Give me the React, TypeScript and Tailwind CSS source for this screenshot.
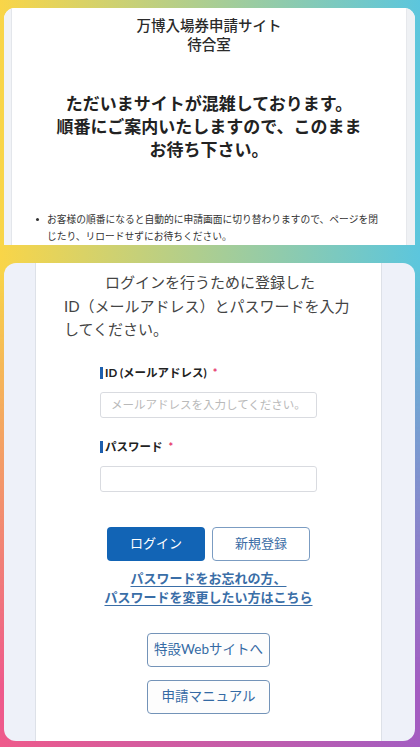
import React from 'react'

function FieldLabel({ text }: { text: string }) {
  return (
    <div className="flex items-center h-[16px]">
      <span className="w-[3px] h-[12px] bg-[#1d5fae]" />
      <span className="ml-[2px] text-[11.5px] font-bold text-[#222]">{text}</span>
      <span className="ml-[6px] text-[11px] font-bold text-[#e6336a] leading-none">*</span>
    </div>
  )
}

function OutlineButton({ label }: { label: string }) {
  return (
    <button className="w-[123px] h-[34px] rounded-[4px] border border-[#7393b8] bg-[#fdfdfd] text-[13.5px] text-[#346aa4]">
      {label}
    </button>
  )
}

export default function App() {
  return (
    <div className="relative w-[420px] h-[747px] overflow-hidden bg-[linear-gradient(to_right,#f9d548,#5cc6dd)] pl-1 pr-[5px] pt-2 pb-[6px] font-['Lato','Noto_Sans_CJK_JP',sans-serif]">
      {/* lower half of the gradient, fades in toward the bottom */}
      <div className="absolute inset-0 bg-[linear-gradient(to_right,#ee5a8b,#a35dc1)] [mask-image:linear-gradient(to_bottom,transparent_36%,black_92%)]" />

      {/* waiting room card (cut off) */}
      <div className="relative flex h-[237px] rounded-t-[11px] overflow-hidden bg-white">
        <div className="w-[8px] bg-[#f1f3f7] border-r border-[#e3e6eb]" />
        <div className="flex-1 bg-white pt-2">
          <div className="text-center text-[14.5px] font-medium leading-[19px] text-[#2b2b2b]">
            万博入場券申請サイト
            <br />
            待合室
          </div>
          <div className="mt-[38px] text-center text-[17px] font-bold leading-[23px] text-[#222]">
            ただいまサイトが混雑しております。
            <br />
            順番にご案内いたしますので、このまま
            <br />
            お待ち下さい。
          </div>
          <div className="mt-[50px] flex pl-[24px] text-[9.75px] leading-[17px] text-[#333]">
            <div className="w-[11px] pt-[7px]">
              <div className="w-[3px] h-[3px] rounded-full bg-[#333]" />
            </div>
            <div>
              お客様の順番になると自動的に申請画面に切り替わりますので、ページを閉
              <br />
              じたり、リロードせずにお待ちください。
            </div>
          </div>
        </div>
        <div className="w-[9px] bg-[#eff1f4] border-l border-[#e6e8ec]" />
      </div>

      <div className="h-[18px]" />

      {/* login card */}
      <div className="relative flex h-[478px] rounded-[12px] overflow-hidden">
        <div className="w-[32px] bg-[#eef1f9] border-r border-[#dde1e8]" />
        <div className="w-[345px] bg-white pt-2">
          <p className="pl-[28px] pr-[20px] indent-[41px] text-[15px] leading-[23.5px] text-[#444]">
            ログインを行うために登録した
            <br />
            ID（メールアドレス）とパスワードを入力
            <br />
            してください。
          </p>

          <div className="mx-auto mt-[23px] w-[217px]">
            <FieldLabel text="ID (メールアドレス)" />
            <input
              className="mt-[11px] block w-full h-[26px] rounded-[3px] border border-[#d9dbe0] px-[10px] text-[11.5px] placeholder:text-[#b9b9b9] outline-none"
              placeholder="メールアドレスを入力してください。"
            />
            <div className="mt-[21px]">
              <FieldLabel text="パスワード" />
            </div>
            <input
              type="password"
              className="mt-[11px] block w-full h-[26px] rounded-[3px] border border-[#d9dbe0] px-[10px] text-[11.5px] outline-none"
            />
          </div>

          <div className="mt-[35px] flex justify-center gap-[7px]">
            <button className="w-[98px] h-[34px] rounded-[4px] bg-[#1264b5] text-[13px] text-white">ログイン</button>
            <button className="w-[98px] h-[34px] rounded-[4px] border border-[#7b9cc2] bg-white text-[13px] text-[#3a6ca5]">
              新規登録
            </button>
          </div>

          <div className="mt-[8px] text-center text-[13px] font-bold leading-[19px] text-[#3a6ea7] underline underline-offset-[3px]">
            パスワードをお忘れの方、
            <br />
            パスワードを変更したい方はこちら
          </div>

          <div className="mt-[26px] flex flex-col items-center gap-[13px]">
            <OutlineButton label="特設Webサイトへ" />
            <OutlineButton label="申請マニュアル" />
          </div>
        </div>
        <div className="flex-1 bg-[#eef1f9] border-l border-[#dde1e8]" />
      </div>
    </div>
  )
}
